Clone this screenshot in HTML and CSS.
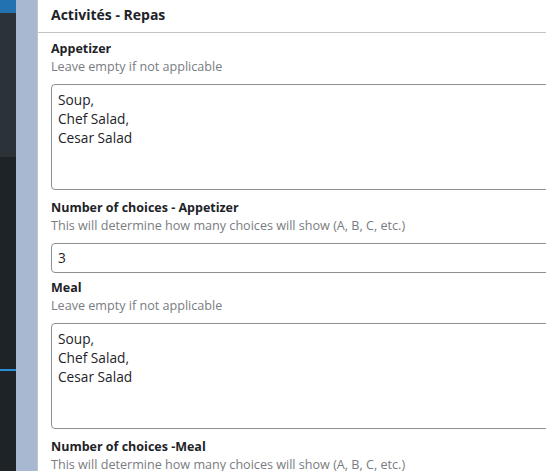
FILE: index.html
```html
<!DOCTYPE html>
<html>
<head>
<meta charset="utf-8">
<link rel="stylesheet" href="styles.css">
</head>
<body>
<div class="layout">
  <aside class="sidebar">
    <div class="sb-top"></div>
    <div class="sb-mid"></div>
    <div class="sb-low">
      <div class="sb-line"></div>
    </div>
  </aside>
  <div class="strip"></div>
  <main class="panel">
    <header class="panel-head">Activités - Repas</header>
    <div class="panel-body">
      <div class="field">
        <div class="label">Appetizer</div>
        <div class="desc">Leave empty if not applicable</div>
        <div class="textarea">Soup,<br>Chef Salad,<br>Cesar Salad</div>
      </div>
      <div class="field">
        <div class="label">Number of choices - Appetizer</div>
        <div class="desc">This will determine how many choices will show (A, B, C, etc.)</div>
        <div class="input">3</div>
      </div>
      <div class="field field-tight">
        <div class="label">Meal</div>
        <div class="desc">Leave empty if not applicable</div>
        <div class="textarea">Soup,<br>Chef Salad,<br>Cesar Salad</div>
      </div>
      <div class="field">
        <div class="label">Number of choices -Meal</div>
        <div class="desc">This will determine how many choices will show (A, B, C, etc.)</div>
      </div>
    </div>
  </main>
</div>
</body>
</html>
```
FILE: styles.css
```css
html, body {
  margin: 0;
  padding: 0;
  height: 100%;
  overflow: hidden;
  background: #ffffff;
}
body {
  font-family: "Open Sans", "Noto Sans", sans-serif;
  color: #1d2327;
}
.layout {
  display: flex;
  height: 471px;
}
.sidebar {
  width: 16px;
  flex: 0 0 16px;
  display: flex;
  flex-direction: column;
}
.sb-top {
  height: 13px;
  background: #2271b1;
}
.sb-mid {
  height: 144px;
  background: #2c3338;
}
.sb-low {
  flex: 1;
  background: #1d2327;
  padding-top: 212px;
}
.sb-line {
  height: 2px;
  background: #2a8fd6;
}
.strip {
  width: 21px;
  flex: 0 0 21px;
  background: #a7b8d0;
}
.panel {
  flex: 1;
  min-width: 0;
  border-left: 1px solid #c3c4c7;
  background: #ffffff;
  overflow: hidden;
}
.panel-head {
  height: 32px;
  line-height: 30px;
  padding: 0 13px;
  font-size: 14px;
  font-weight: 700;
  border-bottom: 1px solid #c3c4c7;
  white-space: nowrap;
}
.panel-body {
  padding: 7px 0 0 13px;
  width: 560px;
}
.field {
  margin-bottom: 9px;
}
.field-tight {
  margin-top: -3px;
}
.label {
  font-size: 12.5px;
  line-height: 18px;
  font-weight: 700;
  white-space: nowrap;
}
.desc {
  font-size: 12.6px;
  line-height: 18px;
  color: #787c82;
  white-space: nowrap;
}
.textarea {
  margin-top: 8px;
  box-sizing: border-box;
  height: 106px;
  border: 1px solid #8c8f94;
  border-radius: 4px;
  padding: 5px 6px;
  font-size: 13.7px;
  line-height: 19px;
  color: #1d2327;
}
.input {
  margin-top: 8px;
  box-sizing: border-box;
  height: 30px;
  border: 1px solid #8c8f94;
  border-radius: 4px;
  padding: 0 6px;
  font-size: 13.7px;
  line-height: 28px;
  color: #1d2327;
}
```
